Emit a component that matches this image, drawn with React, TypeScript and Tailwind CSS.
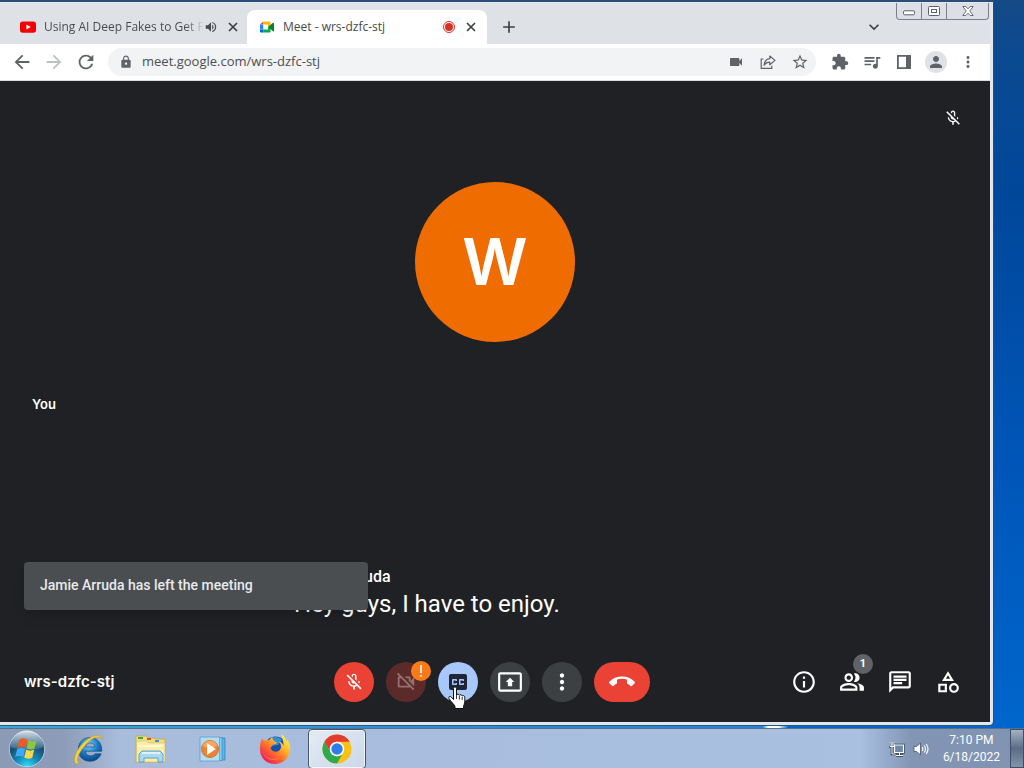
import React from 'react';
import {
  MdAdd,
  MdArrowBack,
  MdArrowForward,
  MdCallEnd,
  MdClosedCaption,
  MdExtension,
  MdInfoOutline,
  MdKeyboardArrowDown,
  MdLock,
  MdMoreVert,
  MdOutlineCategory,
  MdOutlineChat,
  MdOutlineMicOff,
  MdOutlinePeopleAlt,
  MdOutlineVideocamOff,
  MdPerson,
  MdPresentToAll,
  MdQueueMusic,
  MdRefresh,
  MdStarBorder,
  MdVideocam,
  MdVolumeUp,
} from 'react-icons/md';

function YouTubeIcon() {
  return (
    <svg viewBox="0 0 16 16" className="size-4 shrink-0" aria-hidden="true">
      <rect x="0" y="2.4" width="16" height="11.4" rx="2.8" fill="#f50000" />
      <path d="M6.4 5.6v5l4.3-2.5z" fill="#fff" />
    </svg>
  );
}

function MeetIcon() {
  return (
    <svg viewBox="0 0 16 16" className="size-4 shrink-0" aria-hidden="true">
      <path d="M4.2 2.4v3.2H1z" fill="#ea4335" />
      <path d="M1 5.6h3.2v4.8H1z" fill="#2684fc" />
      <path d="M1 10.4h3.2v3.2H2a1 1 0 0 1-1-1z" fill="#0066da" />
      <path d="M4.2 2.4h6.2c.7 0 1.1.4 1.1 1.1v3L9 8V5.6H4.2z" fill="#ffba00" />
      <path d="M4.2 10.4H9V8l2.5 1v3.5c0 .7-.4 1.1-1.1 1.1H4.2z" fill="#00ac47" />
      <path d="M9 8l5-4.2c.4-.3 1-.1 1 .5v7.4c0 .6-.6.8-1 .5z" fill="#00832d" />
    </svg>
  );
}

function RecordingIcon() {
  return (
    <svg viewBox="0 0 14 14" className="size-3.5 shrink-0" aria-label="Recording">
      <circle cx="7" cy="7" r="5.5" fill="#fff" stroke="#d93025" strokeWidth="1" />
      <circle cx="7" cy="7" r="4" fill="#d93025" />
    </svg>
  );
}

function TabCloseIcon() {
  return (
    <svg viewBox="0 0 14 14" className="size-3.5" fill="none" stroke="#3c4043" strokeWidth="1.7" aria-hidden="true">
      <path d="M3 3l8 8M11 3l-8 8" />
    </svg>
  );
}

function ShareIcon() {
  return (
    <svg viewBox="0 0 16 16" className="size-4" fill="none" stroke="#5f6368" strokeWidth="1.2" aria-hidden="true">
      <path d="M3.5 5H1.2v9.3h10.6v-2.5" />
      <path d="M9.8 2l5.2 4.4-5.2 4.4V8.2C7 8.2 5.3 9.2 4 11.2c.4-3.4 2.2-6.1 5.8-6.5z" strokeLinejoin="round" />
    </svg>
  );
}

function SidePanelIcon() {
  return (
    <svg viewBox="0 0 16 16" className="size-4" aria-hidden="true">
      <path fill="#5f6368" fillRule="evenodd" d="M1 1h14v14H1zM2.8 2.8v10.4h7.2V2.8z" />
    </svg>
  );
}

function StartOrb() {
  return (
    <svg viewBox="0 0 38 38" className="size-[38px]" aria-hidden="true">
      <defs>
        <radialGradient id="orb" cx="50%" cy="100%" r="85%">
          <stop offset="0" stopColor="#2fe0ff" />
          <stop offset=".4" stopColor="#1586b4" />
          <stop offset=".75" stopColor="#1c4f74" />
          <stop offset="1" stopColor="#35566f" />
        </radialGradient>
        <linearGradient id="gloss" x1="0" y1="0" x2="0" y2="1">
          <stop offset="0" stopColor="#e8f3fa" stopOpacity=".9" />
          <stop offset="1" stopColor="#a9c5d8" stopOpacity=".2" />
        </linearGradient>
      </defs>
      <circle cx="19" cy="19" r="17.7" fill="url(#orb)" stroke="#c4dbea" strokeWidth=".8" />
      <path d="M2.5 17a16.5 16.5 0 0 1 33 0c-9 3.5-22 3.5-33 0z" fill="url(#gloss)" />
      <path d="M11.500 9.500c3-1.800 5.500-1.400 8 .3l-2 8.200c-2.500-1.600-5-1.700-8-.2z" fill="#ee5a24" />
      <path d="M20.500 10.300c2.700 1.500 5 1.400 8-.1l-2 8.200c-2.700 1.400-5.300 1.300-8-.1z" fill="#8cc63f" />
      <path d="M9.200 19c2.800-1.400 5.400-1.300 8 .2l-2 8.100c-2.500-1.500-5-1.700-8-.3z" fill="#3fa9f5" />
      <path d="M18.200 19.500c2.700 1.500 5.200 1.500 8 .1l-2 8.100c-2.800 1.400-5.300 1.300-8-.1z" fill="#ffd54a" />
    </svg>
  );
}

function ExplorerBrowserIcon() {
  return (
    <svg viewBox="0 0 32 32" className="size-8" aria-hidden="true">
      <defs>
        <radialGradient id="ie" cx="45%" cy="30%" r="75%">
          <stop offset="0" stopColor="#7fdcff" />
          <stop offset=".5" stopColor="#1c7cc4" />
          <stop offset="1" stopColor="#083f80" />
        </radialGradient>
      </defs>
      <path
        fill="url(#ie)"
        stroke="#0b4782"
        strokeWidth=".6"
        fillRule="evenodd"
        d="M17 4.5c6.5 0 11.7 5 11.7 12v1.8H12.5c.3 3.200 2.200 4.500 5 4.500 2.200 0 3.600-.4 4.400-2h6.200c-1.600 4.500-5.600 7.500-10.800 7.500-7.500 0-12-5-12-11.800S9.800 4.500 17 4.500zm-4.400 9.500h9.300c-.3-2.700-2-4-4.600-4s-4.300 1.300-4.700 4z"
      />
      <path
        fill="#f7cf3d"
        stroke="#c99a18"
        strokeWidth=".5"
        d="M29.500 6.500C29 1.500 22 1 15 6 7 11.500 1 21 1.500 27.500c.3 3.500 3 3.800 6 2-2.500.4-3.500-.8-3-3.500C5.500 20.500 10.500 13 16.500 8c5.500-4.500 10.800-5.300 13-1.500z"
      />
    </svg>
  );
}

function FolderIcon() {
  return (
    <svg viewBox="0 0 34 32" className="h-8 w-[34px]" aria-hidden="true">
      <path d="M2 3h10l2 2h6l1 1h10v23H2z" fill="#f4dc83" stroke="#c7a447" strokeWidth=".8" />
      <path d="M4 4h5v2H4z" fill="#36a853" />
      <path d="M13 5h4v2h-4z" fill="#d9542b" />
      <path d="M21 7h4v2h-4z" fill="#3f8fd1" />
      <path d="M2.5 8h10l2 2h16.5v19H2.5z" fill="#fbeea9" stroke="#d9bd62" strokeWidth=".6" />
      <path d="M4 13h25" stroke="#fff8d5" strokeWidth="2" />
      <path d="M5 29v-8l3-3h18l3 3v8h-5v-4H10v4z" fill="#a9d9f2" stroke="#4e9ccb" strokeWidth=".9" />
      <path d="M8 19h18v2H8z" fill="#dff3fc" />
    </svg>
  );
}

function MediaPlayerIcon() {
  return (
    <svg viewBox="0 0 30 28" className="h-7 w-[30px]" aria-hidden="true">
      <path d="M9 3h18v22H9z" fill="#5db4e6" stroke="#2e7fb7" strokeWidth=".7" />
      <path d="M6 2.5h18v23H6z" fill="#8bcdf0" stroke="#3b8dc3" strokeWidth=".7" />
      <path d="M2 2h19.5v24H2z" fill="#b4dcf3" stroke="#5a9fca" strokeWidth=".8" />
      <circle cx="12" cy="14" r="8.5" fill="#ee8432" stroke="#d4631b" strokeWidth=".8" />
      <path d="M4.5 11a8 8 0 0 1 15 0c-5 2-10 2-15 0z" fill="#fbb778" opacity=".7" />
      <path d="M9 8v12l8.800-6z" fill="#fff" />
    </svg>
  );
}

function FirefoxIcon() {
  return (
    <svg viewBox="0 0 32 32" className="size-8" aria-hidden="true">
      <defs>
        <linearGradient id="fox" x1=".9" y1=".1" x2=".2" y2=".9">
          <stop offset="0" stopColor="#fff14f" />
          <stop offset=".35" stopColor="#ffb52b" />
          <stop offset=".65" stopColor="#ff6a2b" />
          <stop offset="1" stopColor="#f21e59" />
        </linearGradient>
      </defs>
      <circle cx="16.5" cy="14.5" r="11" fill="#174ea6" />
      <path d="M10 7c4-4 10-4 13 0l-4 5-7 1z" fill="#2f8fdc" />
      <path
        fill="url(#fox)"
        d="M3 5c.5 1.500 1.500 2.200 2.800 2.500C7.500 6.800 9 6.800 10.500 7c.5-1.500 1.700-2.500 3-3-.2 2 .6 3.500 2.500 4.500l2 .7c-.5 1.500-2 2-4.500 2.500 0 1.500-1 2-2 2.800.8 3 3 4.300 5.500 4.200 3-.2 5.300-2.500 5-5.700-.2-2.200-1.300-3.500-2.500-4.500 3 .3 4.500 2.300 5 4.500C25 8.500 22.500 5 22.500 1c3 2.500 4.500 4.500 5 7l1.200-1.200C31 11 31.700 15 31 18.500 29.500 26 23.500 31 16 31 7.500 31 1.300 25 1 17c-.1-4.500.5-8.500 2-12z"
      />
      <path d="M3 18c3 7 11 10 18 6-5 5-15 4-18-6z" fill="#ff9a2e" opacity=".6" />
    </svg>
  );
}

function ChromeIcon() {
  return (
    <svg viewBox="0 0 30 30" className="size-[30px]" aria-hidden="true">
      <circle cx="15" cy="15" r="14.5" fill="#fbc116" />
      <path d="M2.44 7.75A14.5 14.5 0 0 1 27.56 7.75H15a7.25 7.25 0 0 0-6.28 10.87z" fill="#e33b2e" />
      <path d="M2.44 7.75A14.5 14.5 0 0 0 15 29.5l6.28-10.88A7.25 7.25 0 0 1 8.72 18.62z" fill="#2da94f" />
      <circle cx="15" cy="15" r="7.25" fill="#fff" />
      <circle cx="15" cy="15" r="5.7" fill="#2f7de9" />
    </svg>
  );
}

function NetworkIcon() {
  return (
    <svg viewBox="0 0 16 16" className="size-4" aria-hidden="true">
      <path d="M6 4h8.500v7.500H6zM7 14.500h7M10.500 11v3M1 2v3.500h4V2M3 5v8h3" fill="none" stroke="#2e4258" strokeWidth="2.6" />
      <path d="M5.500 4h9v7.500h-9z" fill="#7188a5" stroke="#fff" strokeWidth="1.2" />
      <path d="M7 14.500h7M10.500 11.500v3M1 1.500v4h4v-4M3 1.500V13h3" fill="none" stroke="#fff" />
    </svg>
  );
}

function SpeakerIcon() {
  return (
    <svg viewBox="0 0 16 16" className="size-4" aria-hidden="true">
      <path d="M1 5.500h2.500L7.500 2v12L3.500 10.500H1z" fill="#fff" stroke="#40566f" strokeWidth=".8" />
      <path d="M9.200 6c.8 1.200.8 2.800 0 4M11.200 4.500c1.500 2 1.500 5 0 7M13.200 3c2.200 3 2.200 7 0 10" fill="none" stroke="#fff" strokeWidth="1.100" />
    </svg>
  );
}

function HandPointer() {
  return (
    <svg viewBox="0 0 18 24" className="pointer-events-none absolute left-[10px] top-[24px] h-6 w-[18px]" aria-hidden="true">
      <path
        d="M5.500 2.500c0-2 3-2 3 0V9c.3-1.300 2.700-1.200 2.900.4.500-1.200 2.600-.9 2.800.7.600-1 2.600-.5 2.600 1.200V16c0 2-1.300 3-1.300 4.500v2H7v-2C6.500 18.500 3 16 1 12.500c-.9-1.800 1-2.800 2.300-1.400l2.200 2.400z"
        fill="#fff"
        stroke="#111"
        strokeWidth="1"
        strokeLinejoin="round"
      />
      <path d="M8.500 9v4M11.400 10v3.500M14.200 11v3" stroke="#222" strokeWidth=".9" />
    </svg>
  );
}

function WindowButtons() {
  const base = 'flex h-4 items-center justify-center border-r border-[#7d8187] last:border-r-0';
  return (
    <div className="mr-px flex self-start overflow-hidden rounded-b border border-t-0 border-[#7d8187] bg-[#dcdfe5]">
      <button aria-label="Minimize" className={`${base} w-[25px]`}>
        <svg viewBox="0 0 12 6" className="mt-1 h-1.5 w-3"><rect x=".5" y=".8" width="11" height="4" rx="1.2" fill="#fff" stroke="#5c6068" /></svg>
      </button>
      <button aria-label="Restore" className={`${base} w-[25px]`}>
        <svg viewBox="0 0 12 10" className="h-2.5 w-3" fill="#fff" stroke="#5c6068"><rect x=".5" y=".5" width="11" height="9" rx="1" /><rect x="3.5" y="3.5" width="5" height="3" /></svg>
      </button>
      <button aria-label="Close window" className={`${base} w-[41px]`}>
        <svg viewBox="0 0 12 10" className="h-2.5 w-3"><path d="M.8.5h3L6 2.8 8.200.5h3L7.800 5l3.400 4.500h-3L6 7.200 3.800 9.500h-3L4.200 5z" fill="#fff" stroke="#5c6068" strokeWidth=".9" /></svg>
      </button>
    </div>
  );
}

function TabStrip() {
  return (
    <div className="flex h-[41px] shrink-0 bg-[#dee1e6] text-xs text-[#45494d]">
      <div className="flex min-w-0 flex-1 items-end pl-[7px]">
        <div className="flex h-[34px] w-60 items-center pl-[13px] pr-2">
          <YouTubeIcon />
          <span className="ml-2 flex-1 bg-linear-to-r from-[#45494d] from-88% to-[#dee1e6] bg-clip-text whitespace-nowrap text-transparent">
            Using AI Deep Fakes to Get F
          </span>
          <MdVolumeUp className="size-3.5 shrink-0" />
          <button aria-label="Close tab" className="ml-2"><TabCloseIcon /></button>
        </div>
        <div className="flex h-[34px] w-60 items-center rounded-t-lg bg-white pl-3 pr-[9px]">
          <MeetIcon />
          <span className="ml-2 flex-1 whitespace-nowrap">Meet - wrs-dzfc-stj</span>
          <RecordingIcon />
          <button aria-label="Close tab" className="ml-2"><TabCloseIcon /></button>
        </div>
        <button aria-label="New tab" className="flex h-[34px] w-11 items-center justify-center text-[#3c4043]">
          <MdAdd className="size-5" />
        </button>
      </div>
      <button aria-label="Search tabs" className="mr-3 mt-2 flex h-8 items-center text-[#3c4043]">
        <MdKeyboardArrowDown className="size-5" />
      </button>
      <WindowButtons />
    </div>
  );
}

function Toolbar() {
  const slot = 'flex w-8 items-center justify-center';
  return (
    <div className="flex h-[37px] shrink-0 items-center border-b border-[#dadce0] bg-white pl-1.5 pr-1.5 text-[#5f6368]">
      <button aria-label="Back" className={slot}><MdArrowBack className="size-[22px]" /></button>
      <button aria-label="Forward" className={`${slot} text-[#bdc1c6]`}><MdArrowForward className="size-[22px]" /></button>
      <button aria-label="Reload" className={slot}><MdRefresh className="size-[22px]" /></button>
      <div className="ml-1.5 flex h-7 flex-1 items-center rounded-full bg-[#f1f3f4] pl-[11px]">
        <MdLock className="size-3.5 shrink-0" />
        <input
          aria-label="Address"
          readOnly
          value="meet.google.com/wrs-dzfc-stj"
          className="ml-[9px] min-w-0 flex-1 bg-transparent text-[13px] text-[#4b4f53] outline-none"
        />
        <button aria-label="Camera in use" className={slot}><MdVideocam className="size-4" /></button>
        <button aria-label="Share page" className={slot}><ShareIcon /></button>
        <button aria-label="Bookmark" className={slot}><MdStarBorder className="size-[18px]" /></button>
      </div>
      <div className="ml-2 flex">
        <button aria-label="Extensions" className={slot}><MdExtension className="size-[18px]" /></button>
        <button aria-label="Media controls" className={slot}><MdQueueMusic className="size-5" /></button>
        <button aria-label="Side panel" className={slot}><SidePanelIcon /></button>
        <button aria-label="Profile" className={slot}>
          <span className="flex size-[22px] items-center justify-center rounded-full bg-[#dee1e6]"><MdPerson className="size-[18px]" /></span>
        </button>
        <button aria-label="Menu" className={slot}><MdMoreVert className="size-[18px]" /></button>
      </div>
    </div>
  );
}

function ControlBar() {
  const round = 'flex size-10 items-center justify-center rounded-full text-white';
  const plain = 'relative flex size-12 items-center justify-center text-white';
  return (
    <footer className="grid h-20 shrink-0 grid-cols-[1fr_auto_1fr] items-center pl-3 pr-[18px]">
      <span className="pl-3 font-['Inter',sans-serif] text-[15px] font-semibold text-white">wrs-dzfc-stj</span>
      <div className="flex gap-3">
        <button aria-label="Turn on microphone" className={`${round} bg-[#ea4335]`}><MdOutlineMicOff className="size-5" /></button>
        <div className="relative">
          <button aria-label="Turn on camera" className={`${round} bg-[#5c2b29]`}><MdOutlineVideocamOff className="size-[22px] text-[#94706f]" /></button>
          <span className="absolute -top-px left-[25px] flex size-5 items-center justify-center rounded-full bg-[#fa7b17]">
            <svg viewBox="0 0 4 12" className="h-3 w-1" fill="#fff" aria-label="Camera problem"><path d="M1.200 0h1.600v8H1.200zM1.200 10h1.600v1.800H1.200z" /></svg>
          </span>
        </div>
        <div className="relative">
          <button aria-label="Turn off captions" className={`${round} bg-[#a8c7fa]`}><MdClosedCaption className="size-6 text-[#1f2535]" /></button>
          <HandPointer />
        </div>
        <button aria-label="Present now" className={`${round} bg-[#3c4043]`}><MdPresentToAll className="size-[26px]" /></button>
        <button aria-label="More options" className={`${round} bg-[#3c4043]`}><MdMoreVert className="size-[26px]" /></button>
        <button aria-label="Leave call" className="flex h-10 w-14 items-center justify-center rounded-full bg-[#ea4335] text-white"><MdCallEnd className="size-[26px]" /></button>
      </div>
      <div className="flex justify-end">
        <button aria-label="Meeting details" className={plain}><MdInfoOutline className="size-[26px]" /></button>
        <button aria-label="Show everyone" className={plain}>
          <MdOutlinePeopleAlt className="size-[26px]" />
          <span className="absolute -top-1 right-[3px] flex size-5 items-center justify-center rounded-full bg-[#5f6368] text-[11px] font-bold">1</span>
        </button>
        <button aria-label="Chat" className={plain}><MdOutlineChat className="size-[26px]" /></button>
        <button aria-label="Activities" className={plain}><MdOutlineCategory className="size-[26px]" /></button>
      </div>
    </footer>
  );
}

function Meeting() {
  return (
    <main className="flex min-h-0 flex-1 flex-col bg-[#202124] font-['Roboto',sans-serif] text-white">
      <section aria-label="Your video" className="flex flex-col px-7 pt-7">
        <MdOutlineMicOff className="size-[18px] self-end" />
        <div className="mt-[55px] flex size-40 items-center justify-center self-center rounded-full bg-[#ef6c00] font-['Inter',sans-serif] text-[64px] font-semibold">W</div>
        <span className="mt-[52px] pl-1 font-['Inter',sans-serif] text-[13px] leading-5 font-semibold">You</span>
      </section>
      <section aria-label="Captions" className="relative mt-auto mb-[21px] pl-[294px]">
        <div className="text-base leading-5 font-medium">Jamie Arruda</div>
        <p className="text-2xl leading-[34px]">Hey guys, I have to enjoy.</p>
        <div role="status" className="absolute left-6 -top-[5px] flex h-12 w-[344px] items-center rounded bg-[#4a4e51] px-4 pb-0.5 text-sm font-medium text-[#e8eaed] shadow-lg">
          Jamie Arruda has left the meeting
        </div>
      </section>
      <ControlBar />
    </main>
  );
}

function Taskbar() {
  const item = 'flex h-10 w-[58px] items-center justify-center';
  return (
    <nav aria-label="Taskbar" className="flex h-10 shrink-0 items-center border-t border-[#54708f] bg-[linear-gradient(to_right,#8b9bb6_0,#8d9db9_65px,#a8bcdc_120px,#a9c0e0_84%,#8295b5_89%,#8093b2_100%)]">
      <button aria-label="Start" className="ml-2 mr-[14px] flex"><StartOrb /></button>
      <div className="flex flex-1 gap-1">
        <button aria-label="Internet Explorer" className={item}><ExplorerBrowserIcon /></button>
        <button aria-label="Windows Explorer" className={item}><FolderIcon /></button>
        <button aria-label="Media Player" className={item}><MediaPlayerIcon /></button>
        <button aria-label="Firefox" className={item}><FirefoxIcon /></button>
        <button aria-label="Google Chrome" className={`${item} rounded-sm border border-[#405672] bg-linear-to-br from-[#e4ebf4] to-[#cbd8e9] shadow-[inset_0_0_0_1px_#f2f6fb]`}><ChromeIcon /></button>
      </div>
      <div className="flex items-center gap-2">
        <NetworkIcon />
        <SpeakerIcon />
        <div className="ml-1.5 mr-2.5 text-center font-['Roboto',sans-serif] text-xs leading-[17px] text-white">
          <div>7:10 PM</div>
          <div>6/18/2022</div>
        </div>
      </div>
      <button aria-label="Show desktop" className="h-full w-3.5 border border-[#3d4f68] bg-linear-to-b from-[#a4b2c6] via-[#5b6c85] to-[#8293ac]" />
    </nav>
  );
}

export default function App() {
  return (
    <div className="flex h-screen flex-col overflow-hidden bg-[linear-gradient(to_bottom,#154a87_0,#0a4a91_8%,#00479a_25%,#0056b8_60%,#0068cf_100%)] font-['Open_Sans',sans-serif]">
      <div className="flex min-h-0 flex-1 flex-col pr-[30px]">
        <div className="flex min-h-0 flex-1 flex-col rounded-br border-t-2 border-r border-b border-[#2c4c7b] border-b-[#1d5c80]">
          <div className="flex min-h-0 flex-1 flex-col rounded-br border-t border-r-3 border-b-3 border-[#e2e7ee]">
            <TabStrip />
            <Toolbar />
            <Meeting />
          </div>
        </div>
      </div>
      <div className="h-[2px] shrink-0 bg-[linear-gradient(to_right,#39a9d0,#2f8bd6_40%,#2a80d4_74.5%,#ffffff_75%,#ffffff_76%,#0064c8_77%)]" />
      <Taskbar />
    </div>
  );
}
